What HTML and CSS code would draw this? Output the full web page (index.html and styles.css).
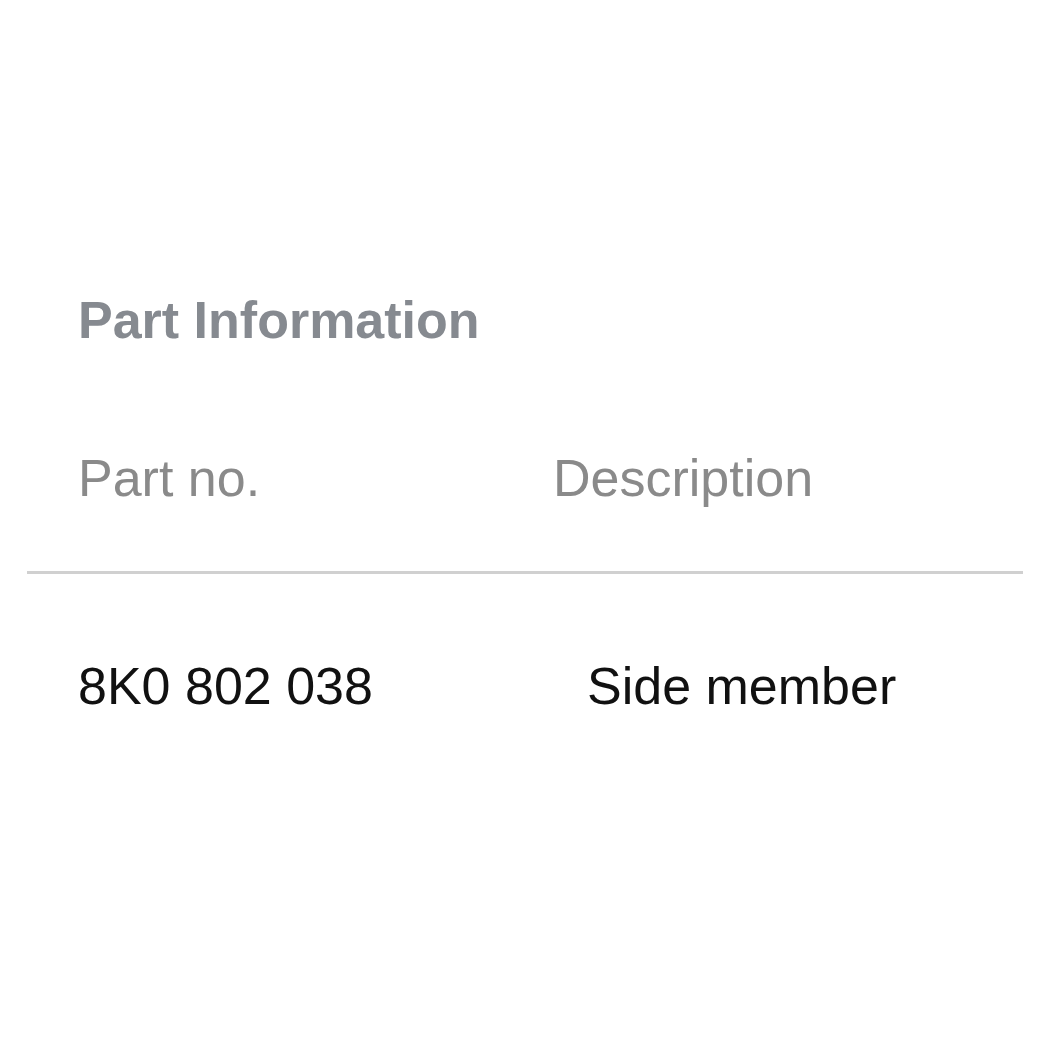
FILE: index.html
```html
<!DOCTYPE html>
<html lang="en">
<head>
  <meta charset="UTF-8" />
  <title>Part Information</title>
  <link rel="stylesheet" href="styles.css">
</head>
<body>
  <div class="panel">
    <h2>Part Information</h2>
    <div class="parts">
      <div class="row head">
        <div class="cell">Part no.</div>
        <div class="cell">Description</div>
      </div>
      <div class="row item">
        <div class="cell partno">8K0 802 038</div>
        <div class="cell desc">Side member</div>
      </div>
    </div>
  </div>
</body>
</html>
```

FILE: styles.css
```css
body {
  margin: 0;
  background: white;
  font-family: "Liberation Sans", Arial, sans-serif;
}
.panel {
  padding-top: 290px;
}
h2 {
  margin: 0 0 0 78px;
  font-size: 52px;
  line-height: 60px;
  font-weight: bold;
  color: #868a90;
}
.parts {
  margin: 98px 27px 0;
}
.row {
  display: grid;
  grid-template-columns: 475px 1fr;
  padding-left: 51px;
  font-size: 52px;
  line-height: 60px;
}
.row.head {
  color: #8a8a8a;
  padding-bottom: 63px;
  border-bottom: 3px solid #d0d0d0;
}
.row.item {
  color: #111;
  padding-top: 82px;
}
.desc {
  padding-left: 34px;
}
```
